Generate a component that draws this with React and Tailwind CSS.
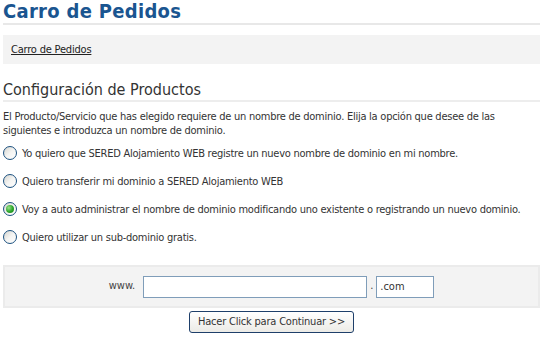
import { useState } from 'react';

const options = [
  'Yo quiero que SERED Alojamiento WEB registre un nuevo nombre de dominio en mi nombre.',
  'Quiero transferir mi dominio a SERED Alojamiento WEB',
  'Voy a auto administrar el nombre de dominio modificando uno existente o registrando un nuevo dominio.',
  'Quiero utilizar un sub-dominio gratis.',
];

const Radio = ({ checked }) => (
  <span className="relative inline-flex h-[14px] w-[14px] shrink-0 items-center justify-center rounded-full border border-[#1c5180] bg-gradient-to-br from-[#d4d4cf] via-[#f4f4f2] to-white">
    {checked && (
      <span className="h-[8px] w-[8px] rounded-full bg-[radial-gradient(circle_at_35%_35%,#9be38a,#2aa52a_55%,#1a7d1a)]" />
    )}
  </span>
);

export default function App() {
  const [selected, setSelected] = useState(2);

  return (
    <div className="mx-[3px] font-['DejaVu_Sans_Condensed','DejaVu_Sans',sans-serif] text-[#333]">
      <h1 className="border-b-2 border-[#e8e8e8] pt-[1px] pb-[2px] text-[20px] font-bold leading-[20px] tracking-[0.3px] text-[#1a5590]">
        Carro de Pedidos
      </h1>

      <div className="mt-[10px] h-[29px] bg-[#f3f3f3] px-[8px] pt-[8px] text-[11px] leading-[14px] tracking-[-0.2px]">
        <a href="#" className="text-[#222] underline">Carro de Pedidos</a>
      </div>

      <h2 className="mt-[17px] border-b-2 border-[#ededed] pb-[2px] text-[16px] leading-[17px] text-[#333]">
        Configuración de Productos
      </h2>

      <p className="mt-[8px] text-[11px] leading-[14px] tracking-[-0.25px]">
        El Producto/Servicio que has elegido requiere de un nombre de dominio. Elija la opción que desee de las siguientes e introduzca un nombre de dominio.
      </p>

      <div className="mt-[8px] flex flex-col gap-[14px]">
        {options.map((label, i) => (
          <label key={i} className="flex cursor-pointer items-end gap-[5px] whitespace-nowrap text-[11px] leading-[13px] tracking-[-0.25px]" onClick={() => setSelected(i)}>
            <Radio checked={selected === i} />
            <span>{label}</span>
          </label>
        ))}
      </div>

      <div className="mt-[21px] flex h-[43px] items-center justify-center border-2 border-[#ebebeb] bg-[#f3f3f3] text-[11px]">
        <span className="mr-[8px] text-[#444]">www.</span>
        <input type="text" className="h-[22px] w-[224px] border border-[#7f9db9] bg-white px-1 outline-none" />
        <span className="mx-[3px] text-[#444]">.</span>
        <input type="text" defaultValue=".com" className="h-[22px] w-[58px] border border-[#7f9db9] bg-white px-[3px] text-[11px] text-[#333] outline-none" />
      </div>

      <div className="mt-[3px] flex justify-center">
        <button className="h-[22px] w-[165px] rounded-[3px] border border-[#1e3f6a] bg-gradient-to-b from-white to-[#ecebe6] text-[11px] tracking-[-0.2px] text-[#333]">
          Hacer Click para Continuar &gt;&gt;
        </button>
      </div>
    </div>
  );
}
